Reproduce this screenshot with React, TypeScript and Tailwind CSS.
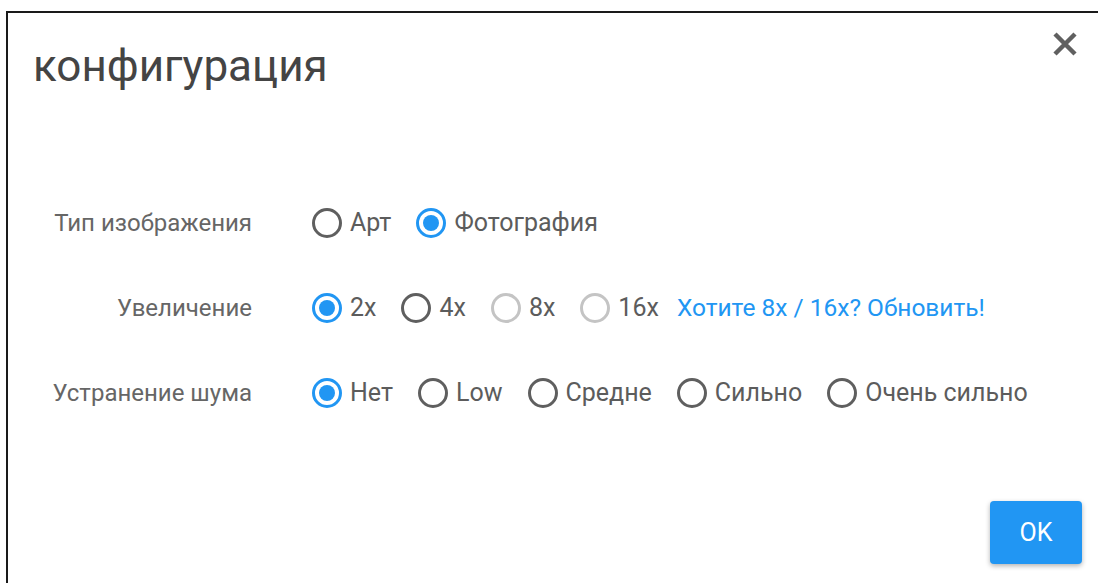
import { useState } from 'react';

type Option = { value: string; label: string; disabled?: boolean };

const imageTypes: Option[] = [
  { value: 'art', label: 'Арт' },
  { value: 'photo', label: 'Фотография' },
];

const scales: Option[] = [
  { value: '2', label: '2x' },
  { value: '4', label: '4x' },
  { value: '8', label: '8x', disabled: true },
  { value: '16', label: '16x', disabled: true },
];

const noiseLevels: Option[] = [
  { value: 'none', label: 'Нет' },
  { value: 'low', label: 'Low' },
  { value: 'medium', label: 'Средне' },
  { value: 'high', label: 'Сильно' },
  { value: 'highest', label: 'Очень сильно' },
];

function Radio({
  option,
  checked,
  onSelect,
}: {
  option: Option;
  checked: boolean;
  onSelect: () => void;
}) {
  const ring = option.disabled
    ? 'border-[#c4c4c4]'
    : checked
      ? 'border-[#2196f3]'
      : 'border-[#5f5f5f]';

  return (
    <label
      className={`flex items-center mr-[25px] ${option.disabled ? 'cursor-default' : 'cursor-pointer'}`}
      onClick={() => !option.disabled && onSelect()}
    >
      <span
        className={`w-[30px] h-[30px] rounded-full border-[3px] ${ring} flex items-center justify-center shrink-0`}
      >
        {checked && <span className="w-[16px] h-[16px] rounded-full bg-[#2196f3]" />}
      </span>
      <span className="ml-[8px] text-[#5c5c5c]">{option.label}</span>
    </label>
  );
}

function Row({ label, children }: { label: string; children: React.ReactNode }) {
  return (
    <div className="flex items-center h-[40px]">
      <div className="w-[244px] text-right text-[24px] text-[#666] shrink-0">{label}</div>
      <div className="flex items-center ml-[60px] text-[25px]">{children}</div>
    </div>
  );
}

export default function App() {
  const [imageType, setImageType] = useState('photo');
  const [scale, setScale] = useState('2');
  const [noise, setNoise] = useState('none');

  return (
    <div
      className="w-[1098px] h-[583px] bg-white overflow-hidden pt-[11px] pl-[6px]"
      style={{ fontFamily: 'Roboto, "Noto Sans", sans-serif' }}
    >
      <div className="relative h-full border-t-2 border-l-2 border-[#1a1a1a] flex flex-col">
        <button className="absolute top-[15px] right-[17px] w-[32px] h-[32px] flex items-center justify-center">
          <svg width="26" height="24" viewBox="0 0 26 24">
            <path d="M3 2L23 22M23 2L3 22" stroke="#606060" strokeWidth="4.5" strokeLinecap="butt" />
          </svg>
        </button>

        <h1 className="pl-[25px] pt-[27px] text-[44px] leading-[52px] text-[#444] font-normal">
          конфигурация
        </h1>

        <div className="mt-[111px] flex flex-col gap-[45px]">
          <Row label="Тип изображения">
            {imageTypes.map((o) => (
              <Radio key={o.value} option={o} checked={imageType === o.value} onSelect={() => setImageType(o.value)} />
            ))}
          </Row>
          <Row label="Увеличение">
            {scales.map((o) => (
              <Radio key={o.value} option={o} checked={scale === o.value} onSelect={() => setScale(o.value)} />
            ))}
            <a className="text-[#2196f3] text-[24.5px] -ml-[7px]" href="#">
              Хотите 8x / 16x? Обновить!
            </a>
          </Row>
          <Row label="Устранение шума">
            {noiseLevels.map((o) => (
              <Radio key={o.value} option={o} checked={noise === o.value} onSelect={() => setNoise(o.value)} />
            ))}
          </Row>
        </div>

        <div className="mt-auto flex justify-end pr-[16px] pb-[19px]">
          <button className="w-[92px] h-[63px] rounded-[4px] bg-[#2196f3] text-white text-[25px] shadow-[0_2px_5px_rgba(0,0,0,0.3)]">
            OK
          </button>
        </div>
      </div>
    </div>
  );
}
